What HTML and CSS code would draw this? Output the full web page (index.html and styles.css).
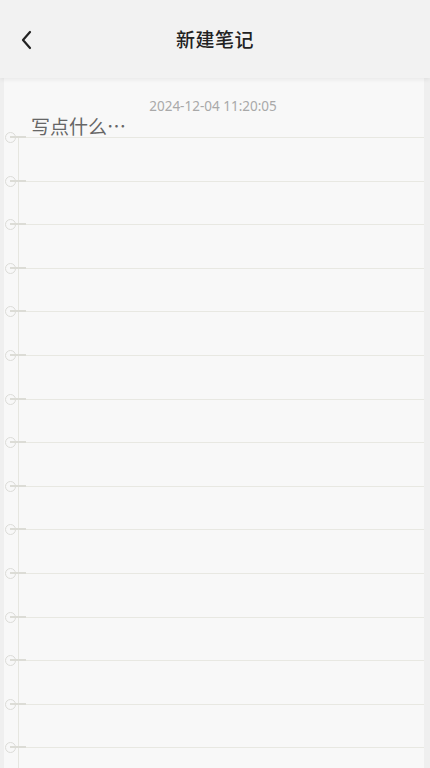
FILE: index.html
```html
<!DOCTYPE html>
<html lang="zh-CN">
<head>
  <meta charset="UTF-8" />
  <meta name="viewport" content="width=device-width, initial-scale=1.0" />
  <title>新建笔记</title>
  <link rel="stylesheet" href="styles.css">
</head>
<body>
  <div class="header">
    <span class="back">
      <svg width="14" height="20" viewBox="0 0 14 20"><path d="M10 2 L3 10 L10 18" fill="none" stroke="#222" stroke-width="2.2" stroke-linecap="round" stroke-linejoin="round"/></svg>
    </span>
    <h1>新建笔记</h1>
  </div>

  <div class="paper">
    <div class="time">2024-12-04 11:20:05</div>
    <div class="placeholder">写点什么…</div>
    <div class="lines">
      <div class="row"></div>
      <div class="row"></div>
      <div class="row"></div>
      <div class="row"></div>
      <div class="row"></div>
      <div class="row"></div>
      <div class="row"></div>
      <div class="row"></div>
      <div class="row"></div>
      <div class="row"></div>
      <div class="row"></div>
      <div class="row"></div>
      <div class="row"></div>
      <div class="row"></div>
      <div class="row"></div>
    </div>
  </div>
</body>
</html>
```

FILE: styles.css
```css
body {
  margin: 0;
  background: #efefef;
  font-family: "Noto Sans", "Noto Sans CJK SC", sans-serif;
  color: #222;
  height: 768px;
  overflow: hidden;
}
.header {
  height: 78px;
  display: flex;
  align-items: center;
  justify-content: center;
  position: relative;
  background: #f2f2f2;
  box-shadow: 0 2px 4px rgba(0,0,0,0.06);
  z-index: 1;
}
.back {
  position: absolute;
  left: 20px;
  top: 30px;
}
h1 {
  margin: 0;
  font-size: 19px;
  font-weight: 500;
  letter-spacing: 0.5px;
  margin-top: -1px;
  font-family: "Noto Sans CJK SC", sans-serif;
}
.paper {
  margin: 0 6px 0 4px;
  background: #f8f8f8;
  height: 690px;
  overflow: hidden;
}
.time {
  padding-top: 18px;
  text-align: center;
  font-size: 13.5px;
  color: #a9a9a9;
  line-height: 20px;
  padding-right: 2px;
}
.placeholder {
  padding-left: 27px;
  font-size: 19px;
  line-height: 20px;
  color: #666;
  font-family: "Noto Sans CJK SC", sans-serif;
  height: 21px;
}
.lines {
  margin-left: 14px;
  border-left: 1px solid #e6e6e0;
}
.row {
  height: 43.6px;
  box-sizing: border-box;
  border-top: 1.5px solid #e8e8e2;
  position: relative;
}
.row::before {
  content: "";
  position: absolute;
  left: -14px;
  top: -6px;
  width: 9px;
  height: 9px;
  border: 1px solid #dcdcd8;
  border-radius: 50%;
  background: #f8f8f8;
}
.row::after {
  content: "";
  position: absolute;
  left: -9px;
  top: -2px;
  width: 16px;
  height: 2px;
  background: #dcdcd6;
}
```
